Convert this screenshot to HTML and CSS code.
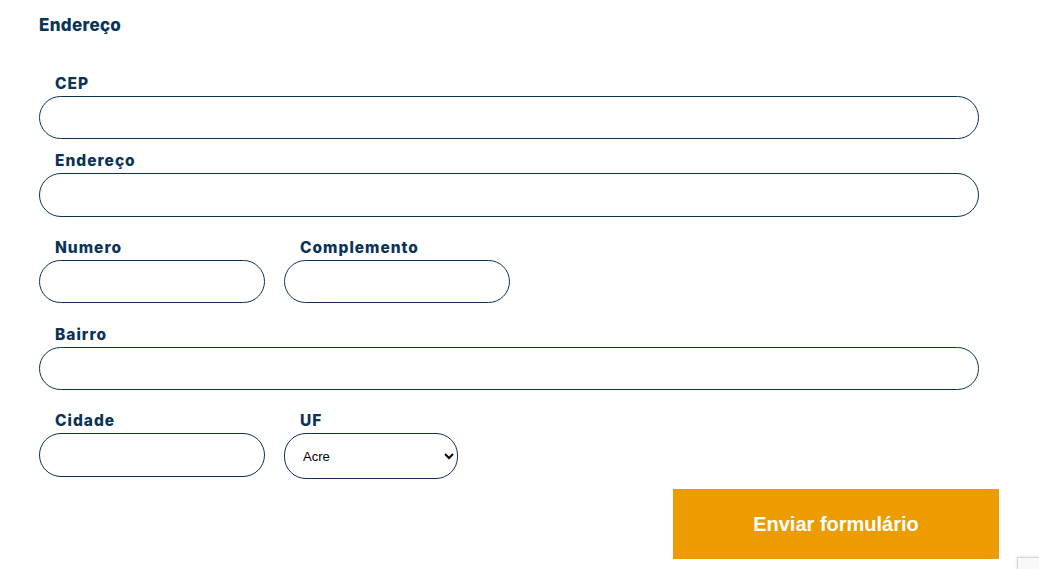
FILE: index.html
```html
<!DOCTYPE html>
<html lang="pt-BR">
<head>
<meta charset="utf-8">
<title>Endereço</title>
<link rel="stylesheet" href="styles.css">
</head>
<body>
<form class="form">
  <h2 class="title">Endereço</h2>
  <div class="group group-first">
    <label class="label" for="cep">CEP</label>
    <input class="field field-full" id="cep" type="text">
  </div>
  <div class="group group-tall">
    <label class="label" for="end">Endereço</label>
    <input class="field field-full field-tall" id="end" type="text">
  </div>
  <div class="row group">
    <div class="col">
      <label class="label" for="num">Numero</label>
      <input class="field field-half" id="num" type="text">
    </div>
    <div class="col">
      <label class="label" for="comp">Complemento</label>
      <input class="field field-half" id="comp" type="text">
    </div>
  </div>
  <div class="group group-tight">
    <label class="label" for="bairro">Bairro</label>
    <input class="field field-full" id="bairro" type="text">
  </div>
  <div class="row group-last">
    <div class="col">
      <label class="label" for="cidade">Cidade</label>
      <input class="field field-half field-tall" id="cidade" type="text">
    </div>
    <div class="col">
      <label class="label" for="uf">UF</label>
      <select class="select" id="uf">
        <option>Acre</option>
        <option>Alagoas</option>
        <option>Amapá</option>
      </select>
    </div>
  </div>
  <div class="actions">
    <button class="submit" type="button">Enviar formulário</button>
  </div>
</form>
<div class="badge"></div>
</body>
</html>
```
FILE: styles.css
```css
html, body {
  margin: 0;
  padding: 0;
  background: #ffffff;
}
body {
  font-family: "Inter", "Noto Sans", sans-serif;
  color: #0a3357;
  overflow: hidden;
}
.form {
  padding: 12px 0 0 39px;
  width: 960px;
}
.title {
  margin: 0;
  font-size: 17px;
  line-height: 26px;
  font-weight: 800;
  letter-spacing: 0.3px;
  height: 26px;
  margin-bottom: 35px;
}
.group {
  margin-bottom: 21px;
}
.group-first {
  margin-bottom: 11px;
}
.group-tall {
  margin-bottom: 20px;
}
.group-tight {
  margin-bottom: 20px;
}
.label {
  display: block;
  padding-left: 16px;
  font-size: 15.5px;
  line-height: 20px;
  font-weight: 800;
  letter-spacing: 1px;
  margin-bottom: 3px;
  position: relative;
  top: 1px;
}
.field {
  display: block;
  box-sizing: border-box;
  height: 43px;
  border: 1px solid #0a3357;
  border-radius: 22px;
  background: #fff;
  padding: 0 16px;
  font-size: 14px;
  outline: none;
}
.field-tall {
  height: 44px;
}
.field-full {
  width: 940px;
}
.field-half {
  width: 226px;
}
.row {
  display: flex;
  gap: 19px;
}
.select {
  display: block;
  box-sizing: border-box;
  width: 174px;
  height: 46px;
  border: 1px solid #0a3357;
  border-radius: 22px;
  background: #fff;
  padding: 0 12px 0 14px;
  font-family: "Liberation Sans", Arial, sans-serif;
  font-size: 13px;
  color: #000;
}
.group-last {
  margin-bottom: 10px;
}
.actions {
  display: flex;
  justify-content: flex-end;
  width: 960px;
}
.submit {
  width: 326px;
  height: 70px;
  border: none;
  background: #ec9c00;
  color: #fff;
  font-family: "Liberation Sans", Arial, sans-serif;
  font-size: 20px;
  font-weight: 700;
  cursor: pointer;
}
.badge {
  position: fixed;
  left: 1017px;
  top: 557px;
  width: 60px;
  height: 60px;
  background: #f9f9f9;
  border: 1px solid #d8d8d8;
  box-shadow: 0 0 3px rgba(0,0,0,0.15);
}
```
